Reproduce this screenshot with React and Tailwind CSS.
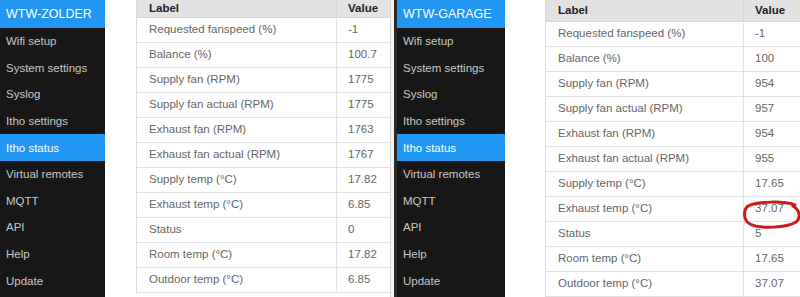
import React from "react";

const menu = [
  "Wifi setup",
  "System settings",
  "Syslog",
  "Itho settings",
  "Itho status",
  "Virtual remotes",
  "MQTT",
  "API",
  "Help",
  "Update",
];

const labels = [
  "Requested fanspeed (%)",
  "Balance (%)",
  "Supply fan (RPM)",
  "Supply fan actual (RPM)",
  "Exhaust fan (RPM)",
  "Exhaust fan actual (RPM)",
  "Supply temp (°C)",
  "Exhaust temp (°C)",
  "Status",
  "Room temp (°C)",
  "Outdoor temp (°C)",
];

const zolder = ["-1", "100.7", "1775", "1775", "1763", "1767", "17.82", "6.85", "0", "17.82", "6.85"];
const garage = ["-1", "100", "954", "957", "954", "955", "17.65", "37.07", "5", "17.65", "37.07"];

function Sidebar({ title, width }) {
  return (
    <div className={`${width} shrink-0 bg-[#171717] flex flex-col`}>
      <div className="h-[28px] bg-[#2196f3] text-white text-[12.5px] flex items-center pl-[6px]">{title}</div>
      {menu.map((m) => (
        <div
          key={m}
          className={`h-[26.6px] shrink-0 flex items-center pl-[6px] pt-[1px] text-[11.5px] ${
            m === "Itho status" ? "bg-[#2196f3] text-white" : "text-[#c8c8c8]"
          }`}
        >
          {m}
        </div>
      ))}
    </div>
  );
}

function Table({ values, labelW, headerH, circle }) {
  return (
    <div className="flex flex-col border-l border-[#dcdcdc]">
      <div className={`${headerH} flex bg-[#e2e2e2] text-[#222] font-bold text-[11.5px] border-b border-[#d6d6d6]`}>
        <div className={`${labelW} flex items-center pl-[12px] border-r border-[#d6d6d6]`}>Label</div>
        <div className="flex-1 flex items-center pl-[11px]">Value</div>
      </div>
      {labels.map((l, i) => (
        <div key={l} className="h-[25px] shrink-0 flex text-[11.5px] text-[#666] border-b border-[#e2e2e2]">
          <div className={`${labelW} flex items-center pl-[12px] border-r border-[#e2e2e2]`}>{l}</div>
          <div className="flex-1 flex items-center pl-[11px] relative">
            {values[i]}
            {circle && i === 7 && (
              <svg className="absolute left-[-1px] top-[3px]" width="58" height="30" viewBox="0 0 58 30" fill="none">
                <path
                  d="M52 5 C42 1, 14 1, 5 6 C0 10, 0 20, 7 24 C16 29, 44 28, 53 22 C58 18, 57 10, 50 6"
                  stroke="#d01818"
                  strokeWidth="3"
                  strokeLinecap="round"
                />
              </svg>
            )}
          </div>
        </div>
      ))}
    </div>
  );
}

export default function App() {
  return (
    <div className="w-[800px] h-[297px] overflow-hidden bg-white flex font-['Liberation_Sans',Arial,sans-serif]">
      <div className="w-[394px] shrink-0 flex">
        <Sidebar title="WTW-ZOLDER" width="w-[105px]" />
        <div className="w-[31px] shrink-0" />
        <div className="w-[255px] shrink-0 border-r border-[#d6d6d6]">
          <Table values={zolder} labelW="w-[200px]" headerH="h-[18px]" />
        </div>
        <div className="flex-1 bg-[#f4f4f4]" />
      </div>
      <div className="w-[3px] shrink-0 bg-[#2a2a2a]" />
      <Sidebar title="WTW-GARAGE" width="w-[108px]" />
      <div className="w-[40px] shrink-0" />
      <div className="flex-1">
        <Table values={garage} labelW="w-[198px]" headerH="h-[22px]" circle />
      </div>
    </div>
  );
}
